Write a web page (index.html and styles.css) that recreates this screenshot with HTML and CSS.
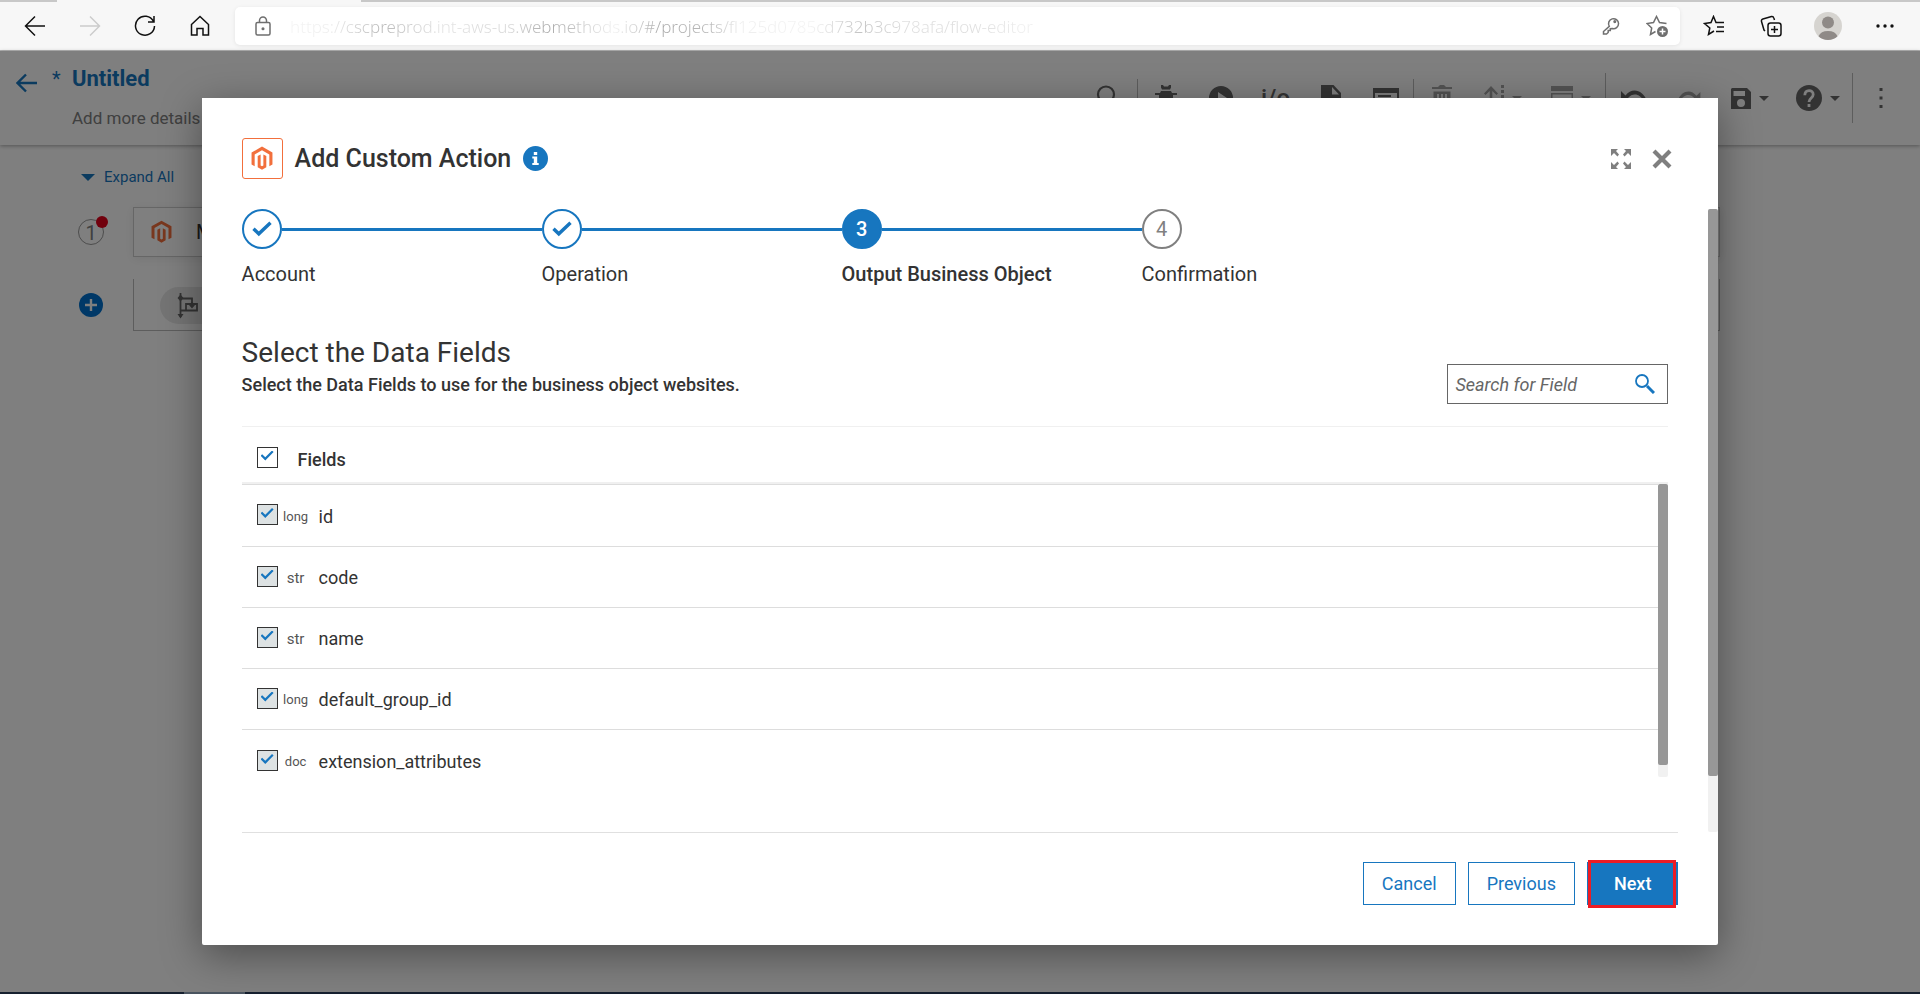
FILE: index.html
```html
<!DOCTYPE html>
<html lang="en">
<head>
  <meta charset="UTF-8">
  <title>Untitled - Flow Editor</title>
  <link rel="stylesheet" href="styles.css">
</head>
<body>
  <svg class="sprite" aria-hidden="true">
    <symbol id="magento" viewBox="0 0 24 26">
      <path fill="#f26f3c" d="M12 0 23.4 6.5V19.5L20 21.4V8.5L12 3.9 4 8.5V21.4L.6 19.5V6.5ZM7.3 10.4 10.5 8.6V20.6L12 21.5 13.5 20.6V8.6L16.7 10.4V22.5L12 25.2 7.3 22.5Z"/>
    </symbol>
    <symbol id="check" viewBox="0 0 20 16">
      <path fill="none" stroke="#1776bf" stroke-width="3.4" d="M1.5 7.8 6.8 12.8 18.5 1.8"/>
    </symbol>
  </svg>

  <div class="tabstrip"><div class="tab"></div></div>
  <nav class="browser">
    <button class="nav-btn" aria-label="Back"><svg width="22" height="22" viewBox="0 0 22 22"><path d="M21 11H2M11 1.5 1.5 11 11 20.5"/></svg></button>
    <button class="nav-btn off" aria-label="Forward"><svg width="22" height="22" viewBox="0 0 22 22"><path d="M1 11h19M11 1.500 20.500 11 11 20.500"/></svg></button>
    <button class="nav-btn" aria-label="Refresh"><svg width="22" height="22" viewBox="0 0 22 22"><path d="M19.500 6.500A9.500 9.500 0 1 0 20.500 11M20 1v6h-6"/></svg></button>
    <button class="nav-btn" aria-label="Home"><svg width="22" height="22" viewBox="0 0 22 22"><path d="M2.500 9.500 11 1.500l8.500 8v10.500h-5.500v-6.500h-6v6.500H2.500Z"/></svg></button>
    <div class="address">
      <svg class="lock" width="18" height="20" viewBox="0 0 18 20"><rect x="2" y="6.500" width="14" height="12.500" rx="1.500"/><path d="M5.500 6.500V4.500a3.500 3.500 0 0 1 7 0v2"/><circle cx="9" cy="12.700" r=".8"/></svg>
      <input class="url" type="text" aria-label="Address" value="https://cscpreprod.int-aws-us.webmethods.io/#/projects/fl125d0785cd732b3c978afa/flow-editor">
      <button class="addr-btn" aria-label="Saved passwords"><svg width="18" height="18" viewBox="0 0 18 18"><circle cx="12.800" cy="4.600" r=".8"/><path d="M7.300 9.300A5 5 0 1 1 10.300 11.500L8.300 11.700V13.500H6.200V15.500L4.500 17H1.500V14.500Z"/></svg></button>
      <button class="addr-btn" aria-label="Add to favorites"><svg width="22" height="22" viewBox="0 0 22 22"><path d="M9.500 16.500 4.500 19.500 5.700 13 1 8.500 7.500 7.500 10.500 1.500 13.500 7.500 20.500 8.500"/><circle cx="16.500" cy="16.500" r="5.500" fill="#6f6f6f" stroke="none"/><path stroke="#fff" d="M16.500 13.500v6M13.500 16.500h6"/></svg></button>
    </div>
    <button class="nav-btn wide" aria-label="Favorites"><svg width="22" height="22" viewBox="0 0 22 22"><path d="M11 16 5.500 19.500 6.800 13 1.500 8.500 8 7.500 10.500 1.500 13 7.500H21M14 12h7M13 16.500h8"/></svg></button>
    <button class="nav-btn wide" aria-label="Collections"><svg width="22" height="22" viewBox="0 0 22 22"><rect x="8" y="8" width="13" height="13" rx="2.500"/><path d="M14.500 11v7M11 14.500h7M5 16 4 15 1.500 6.500a2 2 0 0 1 1.400-2.500L11.500 1.500a2 2 0 0 1 2.300 1.400L14.500 5"/></svg></button>
    <button class="nav-btn wide" aria-label="Profile"><svg width="28" height="28" viewBox="0 0 28 28"><circle cx="14" cy="14" r="14" fill="#d6d4d0" stroke="none"/><circle cx="14" cy="10.500" r="6" fill="#8f8a87" stroke="none"/><path fill="#8f8a87" stroke="none" d="M4.500 24.200a10 7.500 0 0 1 19 0A14 14 0 0 1 4.500 24.200Z"/></svg></button>
    <button class="nav-btn wide" aria-label="Settings"><svg width="18" height="4" viewBox="0 0 18 4"><g fill="#111" stroke="none"><circle cx="2" cy="2" r="1.700"/><circle cx="9" cy="2" r="1.700"/><circle cx="16" cy="2" r="1.700"/></g></svg></button>
  </nav>

  <div class="app">
    <header class="app-header">
      <a class="back" href="#" aria-label="Back to projects"><svg width="22" height="20" viewBox="0 0 22 20"><path d="M21 10H2M10 1.500 1.500 10l8.500 8.500"/></svg></a>
      <span class="dirty">*</span>
      <div class="flow-name">
        <h1>Untitled</h1>
        <p>Add more details</p>
      </div>
      <div class="tools">
        <button class="tool wide" aria-label="Search"><svg width="24" height="26" viewBox="0 0 24 26"><circle cx="11" cy="9.500" r="8" fill="none" stroke="#666" stroke-width="2.200"/><path stroke="#666" stroke-width="3" d="m17 16 6 7"/></svg></button>
        <span class="sep"></span>
        <button class="tool" aria-label="Debug"><svg width="22" height="26" viewBox="0 0 22 26"><path d="M6 0h2l1 1.500h4L14 0h2v2.500L15 4.500H7L6 2.500ZM6 6h10l1 2h5v2h-4v4h4v2h-4l-2 6-5 3-5-3-2-6H0v-2h4v-4H0V8h5Z"/></svg></button>
        <button class="tool" aria-label="Run"><svg width="24" height="24" viewBox="0 0 24 24"><path fill-rule="evenodd" d="M12 0a12 12 0 1 0 0 24 12 12 0 0 0 0-24ZM9 6l9 6-9 6Z"/></svg></button>
        <button class="tool io" aria-label="Input and output">i/o</button>
        <button class="tool" aria-label="Document"><svg width="20" height="26" viewBox="0 0 20 26"><path fill-rule="evenodd" d="M0 0h12.500L20 8v18H0ZM11 2v7.500h7Z"/></svg></button>
        <button class="tool" aria-label="Window"><svg width="26" height="20" viewBox="0 0 26 20"><path fill-rule="evenodd" d="M0 0h26v20H0ZM2 5v13h22V5ZM5 7h13v2H5Z"/></svg></button>
        <span class="sep"></span>
        <button class="tool faint" aria-label="Delete"><svg width="20" height="26" viewBox="0 0 20 26"><path fill-rule="evenodd" d="M0 2h6l2-2h4l2 2h6v2H0ZM1.500 6.500h17V26h-17ZM5 9v14h2V9Zm4 0v14h2V9Zm4 0v14h2V9Z"/></svg></button>
        <button class="tool pair faint" aria-label="Move"><svg width="20" height="26" viewBox="0 0 20 26"><path d="M7 1 0 8.500l1.500 1.500L5.700 6v20h2.600V6l4.200 4L14 8.500ZM17 0h3v3h-3Zm0 5h3v3h-3Zm0 5h3v3h-3Zm0 5h3v3h-3Z"/></svg><i class="caret"></i></button>
        <button class="tool pair faint" aria-label="Layout"><svg width="22" height="24" viewBox="0 0 22 24"><path fill-rule="evenodd" d="M0 0h22v5H0ZM0 7h22v17H0ZM1.500 8.500v14h19v-14Z"/></svg><i class="caret"></i></button>
        <span class="sep tall"></span>
        <button class="tool" aria-label="Undo"><svg width="26" height="16" viewBox="0 0 26 16"><path d="M0 1v11h11L7 8c5-6 13-4 16 4l3-1C22 0 11-3 4.500 5.500Z"/></svg></button>
        <button class="tool faint" aria-label="Redo"><svg width="26" height="14" viewBox="0 0 26 16"><path d="M26 1v11H15l4-4C14 2 6 4 3 12l-3-1C4 0 15-3 21.500 5.500Z"/></svg></button>
        <button class="tool pair" aria-label="Save"><svg width="20" height="21" viewBox="0 0 20 21"><path fill-rule="evenodd" d="M1 0h15l4 4v17H0V1ZM2.500 3v5h11.500V3ZM10 11a4 4 0 1 0 0 8 4 4 0 0 0 0-8Z"/></svg><i class="caret"></i></button>
        <button class="tool pair" aria-label="Help"><svg width="26" height="26" viewBox="0 0 26 26"><circle cx="13" cy="13" r="13"/><path fill="none" stroke="#fff" stroke-width="2.800" d="M8.800 10.200C9 4 17.200 4.300 17.200 9.500 17.200 13 13 13 13 17"/><path fill="#fff" d="M11.600 19h2.800v3h-2.800Z"/></svg><i class="caret"></i></button>
        <span class="sep tall"></span>
        <button class="tool" aria-label="More"><svg width="4" height="20" viewBox="0 0 4 20"><path d="M.5 0h3v3h-3Zm0 8.500h3v3h-3Zm0 8.500h3v3h-3Z"/></svg></button>
      </div>
    </header>

    <main class="canvas">
      <button class="expand"><i class="caret big"></i>Expand All</button>
      <div class="flow-row">
        <div class="marker"><span class="num">1<i class="alert"></i></span></div>
        <div class="card"><svg width="21" height="24"><use href="#magento"/></svg><span>Magento</span></div>
      </div>
      <div class="flow-row">
        <div class="marker"><button class="add" aria-label="Add step"><svg width="12" height="12" viewBox="0 0 12 12"><path stroke="#fff" stroke-width="2.400" d="M6 0v12M0 6h12"/></svg></button></div>
        <div class="drop">
          <div class="pill"><svg width="22" height="26" viewBox="0 0 22 26"><path fill="none" stroke="#666" stroke-width="1.800" d="M3.500 0v24M3.500 5.500H15V11M3.500 17.500H20V11H9v6.500"/><path fill="#666" d="M3.500 1.500 6.500 5l-3 3.500-3-3.500ZM15 8.500l3 3.500-3 3.500-3-3.500ZM.5 21h6l-3 4.500Z"/></svg></div>
        </div>
      </div>
    </main>

    <div class="overlay">
      <section class="modal" role="dialog" aria-labelledby="modalTitle">
        <header class="modal-header">
          <span class="logo"><svg width="22" height="25"><use href="#magento"/></svg></span>
          <h2 id="modalTitle">Add Custom Action</h2>
          <button class="info" aria-label="Info"><svg width="25" height="25" viewBox="0 0 25 25"><circle cx="12.500" cy="12.500" r="12.500" fill="#1776bf"/><path fill="#fff" d="M10.800 6h3.400v3h-3.400ZM9.300 10.500h4.900v6.500h1.500v2H9.300v-2h1.500v-4.500H9.300Z"/></svg></button>
          <div class="window-btns">
            <button aria-label="Full screen"><svg width="20" height="20" viewBox="0 0 20 20"><path fill="#7f7f7f" d="M0 0h7L5 2l3 3.500L6.500 7.500 3 4 0 7ZM20 0h-7l2 2-3 3.500 1.500 2L17 4l3 3ZM0 20h7l-2-2 3-3.500-1.500-2L3 16l-3-3ZM20 20h-7l2-2-3-3.500 1.500-2L17 16l3-3Z"/></svg></button>
            <button aria-label="Close"><svg width="20" height="20" viewBox="0 0 20 20"><path stroke="#7f7f7f" stroke-width="4.200" d="m2 2 16 16M18 2 2 18"/></svg></button>
          </div>
        </header>

        <div class="modal-body">
          <div class="body-content">
            <ol class="steps">
              <li class="done"><span class="dot"><svg width="20" height="16"><use href="#check"/></svg></span>Account</li>
              <li class="done"><span class="dot"><svg width="20" height="16"><use href="#check"/></svg></span>Operation</li>
              <li class="current"><span class="dot">3</span>Output Business Object</li>
              <li><span class="dot">4</span>Confirmation</li>
            </ol>

            <div class="fields-head">
              <div>
                <h3>Select the Data Fields</h3>
                <p>Select the Data Fields to use for the business object websites.</p>
              </div>
              <div class="search">
                <input type="text" placeholder="Search for Field" aria-label="Search for Field">
                <button aria-label="Search"><svg width="20" height="20" viewBox="0 0 20 20"><circle cx="7" cy="7" r="6" fill="none" stroke="#1776bf" stroke-width="1.800"/><path stroke="#1776bf" stroke-width="3" d="m12 12 7 7"/></svg></button>
              </div>
            </div>

            <div class="all-row">
              <input type="checkbox" id="all" checked>
              <label for="all">Fields</label>
            </div>
            <div class="field-list">
              <ul>
                <li><input type="checkbox" id="f1" checked><span class="type small">long</span><label for="f1">id</label></li>
                <li><input type="checkbox" id="f2" checked><span class="type">str</span><label for="f2">code</label></li>
                <li><input type="checkbox" id="f3" checked><span class="type">str</span><label for="f3">name</label></li>
                <li><input type="checkbox" id="f4" checked><span class="type small">long</span><label for="f4">default_group_id</label></li>
                <li><input type="checkbox" id="f5" checked><span class="type small">doc</span><label for="f5">extension_attributes</label></li>
              </ul>
              <div class="scrollbar"><div class="thumb list-thumb"></div></div>
            </div>
          </div>
          <div class="scrollbar"><div class="thumb"></div></div>
        </div>

        <footer class="modal-footer">
          <button class="btn">Cancel</button>
          <button class="btn">Previous</button>
          <button class="btn primary">Next</button>
        </footer>
      </section>
    </div>
  </div>
  <div class="taskbar"><div class="task"></div></div>
</body>
</html>
```
FILE: styles.css
```css
* {
  box-sizing: border-box;
}
body {
  margin: 0;
  height: 100vh;
  display: flex;
  flex-direction: column;
  overflow: hidden;
  font-family: Roboto, sans-serif;
  color: #333;
  background: #fff;
}
h1, h2, h3, p, ul, ol {
  margin: 0;
  padding: 0;
}
ul, ol {
  list-style: none;
}
button {
  font-family: inherit;
  padding: 0;
  border: none;
  background: none;
  cursor: pointer;
}
svg {
  display: block;
  flex: none;
}
.sprite {
  position: absolute;
  width: 0;
  height: 0;
}

/* browser bar */
.tabstrip {
  height: 2px;
  background: #c8c8c8;
}
.tab {
  width: 304px;
  height: 2px;
  margin-left: 57px;
  background: #f7f7f7;
}
.browser {
  display: flex;
  align-items: center;
  height: 49px;
  padding: 0 7px;
  background: #f7f7f7;
  border-bottom: 1px solid #b4b4b4;
}
.nav-btn {
  display: flex;
  align-items: center;
  justify-content: center;
  width: 55px;
  height: 40px;
}
.nav-btn.wide {
  width: 57px;
}
.browser svg {
  fill: none;
  stroke: #111;
  stroke-width: 1.5;
}
.browser .off svg {
  stroke: #ccc;
}
.address {
  flex: 1;
  display: flex;
  align-items: center;
  height: 38px;
  margin: 0 5px 0 8px;
  padding-left: 19px;
  background: #fff;
  border-radius: 5px;
  box-shadow: 0 1px 4px rgba(0,0,0,0.08);
}
.browser .address svg {
  stroke: #6f6f6f;
}
.browser .address path[stroke] {
  stroke: #fff;
}
.url {
  flex: 1;
  margin-left: 18px;
  padding: 0;
  border: none;
  outline: none;
  font-family: "Noto Sans", sans-serif;
  font-size: 17px;
  font-weight: 300;
  color: transparent;
  background: linear-gradient(to right, #f4f4f4 0, #eee 40px, #b8b8b8 90px, #e4e4e4 150px, #d8d8d8 220px, #aaa 260px, #f2f2f2 325px, #aaa 370px, #bbb 420px, #eee 450px, #f4f4f4 520px, #c4c4c4 570px, #e0e0e0 620px, #ddd 680px, #f4f4f4 750px);
  -webkit-background-clip: text;
  background-clip: text;
}
.addr-btn {
  display: flex;
  align-items: center;
  justify-content: center;
  width: 46px;
  height: 36px;
}

/* flow editor */
.app {
  position: relative;
  flex: 1;
  min-height: 0;
}
.app-header {
  display: flex;
  align-items: flex-start;
  height: 94px;
  padding: 0 12px 0 16px;
  box-shadow: 0 1px 4px rgba(0,0,0,0.35);
}
.back {
  margin-top: 22px;
}
.back svg {
  fill: none;
  stroke: #1776bf;
  stroke-width: 2.4;
}
.dirty {
  width: 20px;
  margin: 14px 0 0 14px;
  font-size: 20px;
  line-height: 28px;
  color: #1776bf;
}
.flow-name {
  flex: 1;
}
.flow-name h1 {
  margin-top: 14px;
  font-size: 22px;
  line-height: 28px;
  font-weight: 700;
  color: #1776bf;
}
.flow-name p {
  margin-top: 12px;
  font-size: 17px;
  line-height: 26px;
  color: #808080;
}
.tools {
  display: flex;
  align-items: center;
  height: 94px;
}
.tool {
  display: flex;
  align-items: center;
  justify-content: center;
  width: 55px;
  height: 50px;
  fill: #666;
  color: #666;
}
.tool.wide {
  width: 60px;
}
.tool.pair {
  width: 68px;
  gap: 8px;
}
.tool.faint {
  fill: #a6a6a6;
  color: #a6a6a6;
}
.tool.io {
  font-size: 24px;
  font-weight: 500;
}
.sep {
  width: 1px;
  height: 38px;
  background: #bbb;
}
.sep.tall {
  height: 50px;
}
.caret {
  border: 5px solid transparent;
  border-top-color: currentColor;
  border-bottom: none;
}
.caret.big {
  border-width: 7px;
  border-top-color: #1776bf;
  border-bottom: none;
}
.canvas {
  padding: 20px 200px 0 77px;
}
.expand {
  display: flex;
  align-items: center;
  gap: 9px;
  height: 24px;
  padding-left: 4px;
  font-size: 15px;
  color: #1776bf;
}
.flow-row {
  display: flex;
  margin-top: 18px;
}
.flow-row + .flow-row {
  margin-top: 22px;
}
.marker {
  display: flex;
  align-items: center;
  justify-content: center;
  width: 56px;
  padding-right: 28px;
}
.num {
  position: relative;
  width: 26px;
  height: 26px;
  border: 1px solid #999;
  border-radius: 50%;
  text-align: center;
  font-size: 20px;
  line-height: 26px;
  color: #808080;
}
.alert {
  position: absolute;
  top: -4px;
  right: -5px;
  width: 12px;
  height: 12px;
  border-radius: 50%;
  background: #e2001a;
}
.add {
  display: flex;
  align-items: center;
  justify-content: center;
  width: 24px;
  height: 24px;
  border-radius: 50%;
  background: #0071ce;
}
.card {
  flex: 1;
  display: flex;
  align-items: center;
  gap: 24px;
  height: 50px;
  padding-left: 17px;
  border: 1px solid #ccc;
  box-shadow: 0 2px 10px rgba(0,0,0,0.08);
  font-size: 20px;
}
.drop {
  flex: 1;
  height: 52px;
  padding: 8px 0 0 26px;
  border: 1px solid #bbb;
  border-top: none;
}
.pill {
  width: 120px;
  height: 37px;
  padding: 6px 0 0 17px;
  border-radius: 19px;
  background: #e9e9e9;
}

/* modal */
.overlay {
  position: absolute;
  inset: 0;
  display: flex;
  align-items: center;
  justify-content: center;
  background: rgba(0,0,0,0.5);
}
.modal {
  display: flex;
  flex-direction: column;
  width: 79%;
  height: 90%;
  background: #fff;
  border-radius: 0 0 2px 2px;
  box-shadow: 0 10px 40px rgba(0,0,0,0.4);
}
.modal-header {
  display: flex;
  align-items: center;
  padding: 40px 46px 30px 40px;
}
.logo {
  display: flex;
  align-items: center;
  justify-content: center;
  width: 41px;
  height: 41px;
  border: 1px solid #f26f3c;
  border-radius: 3px;
}
.modal-header h2 {
  margin-left: 12px;
  font-size: 25px;
  line-height: 32px;
  font-weight: 500;
}
.info {
  margin-left: 12px;
}
.window-btns {
  display: flex;
  gap: 21px;
  margin-left: auto;
}
.modal-body {
  flex: 1;
  display: flex;
  min-height: 0;
}
.body-content {
  flex: 1;
  padding: 0 40px;
}
.scrollbar {
  width: 10px;
  background: #f1f1f1;
  border-radius: 2px;
}
.thumb {
  height: 91%;
  background: #979797;
  border-radius: 2px;
}
.list-thumb {
  height: 96%;
}
.steps {
  display: flex;
}
.steps li {
  position: relative;
  width: 300px;
  font-size: 20px;
  line-height: 28px;
}
.steps li + li::before {
  content: "";
  position: absolute;
  top: 19px;
  right: 100%;
  width: 260px;
  height: 3px;
  background: #1776bf;
}
.dot {
  display: flex;
  align-items: center;
  justify-content: center;
  width: 40px;
  height: 40px;
  margin-bottom: 11px;
  border: 2px solid #808080;
  border-radius: 50%;
  color: #808080;
}
.done .dot {
  border-color: #1776bf;
}
.steps .current {
  font-weight: 500;
}
.current .dot {
  border-color: #1776bf;
  background: #1776bf;
  color: #fff;
}
.fields-head {
  display: flex;
  justify-content: space-between;
  align-items: flex-end;
  margin-top: 45px;
  padding-bottom: 22px;
  border-bottom: 1px solid #f0f0f0;
}
.fields-head h3 {
  font-size: 28px;
  line-height: 40px;
  font-weight: 400;
}
.fields-head p {
  margin-bottom: 7px;
  font-size: 18px;
  line-height: 24px;
  font-weight: 500;
}
.search {
  display: flex;
  align-items: center;
  width: 221px;
  height: 40px;
  padding: 0 12px 0 7px;
  border: 1px solid #666;
}
.search input {
  flex: 1;
  min-width: 0;
  padding: 0;
  border: none;
  outline: none;
  font-family: inherit;
  font-size: 18px;
  font-style: italic;
}
.search input::placeholder {
  color: #666;
}
.all-row {
  display: flex;
  align-items: center;
  height: 57px;
  padding: 9px 0 0 15px;
  border-bottom: 2px solid #f0f0f0;
}
.all-row label {
  margin-left: 20px;
  font-size: 18px;
  font-weight: 500;
}
input[type="checkbox"] {
  appearance: none;
  display: grid;
  place-content: center;
  width: 21px;
  height: 21px;
  margin: 0 0 4px;
  padding-bottom: 3px;
  border: 1px solid #333;
  background: #fff;
}
input[type="checkbox"]:checked::before {
  content: "";
  width: 13px;
  height: 10px;
  background: #1776bf;
  clip-path: polygon(0 52%, 12% 36%, 36% 66%, 88% 0, 100% 15%, 36% 100%);
}
.field-list {
  display: flex;
}
.field-list ul {
  flex: 1;
}
.field-list li {
  display: flex;
  align-items: center;
  height: 61px;
  padding: 2px 0 0 15px;
  border-top: 1px solid #ddd;
}
.field-list li:first-child {
  height: 62px;
}
.field-list li:last-child {
  height: 48px;
  padding-top: 20px;
  align-items: flex-start;
}
.field-list input[type="checkbox"] {
  background: #dde2e3;
}
.type {
  width: 36px;
  margin-right: 5px;
  text-align: center;
  font-size: 15px;
  line-height: 24px;
  color: #555;
}
.type.small {
  font-size: 13px;
}
.field-list label {
  font-size: 18px;
  line-height: 24px;
}
.modal-footer {
  display: flex;
  justify-content: flex-end;
  gap: 12px;
  margin: 0 30px 0 40px;
  padding: 29px 0 40px;
  margin-right: 40px;
  border-top: 1px solid #e0e0e0;
}
.btn {
  position: relative;
  height: 43px;
  padding: 0 18px;
  border: 1px solid #1776bf;
  font-size: 18px;
  color: #1776bf;
}
.btn.primary {
  padding: 0 26px;
  background: #1776bf;
  color: #fff;
  font-weight: 500;
}
.btn.primary::after {
  content: "";
  position: absolute;
  inset: -3px 1px -4px 0;
  border: 3px solid #ed1c24;
}

.taskbar {
  height: 2px;
  background: #16202f;
}
.task {
  width: 61px;
  height: 2px;
  margin-left: 184px;
  background: #4b5560;
}
```
